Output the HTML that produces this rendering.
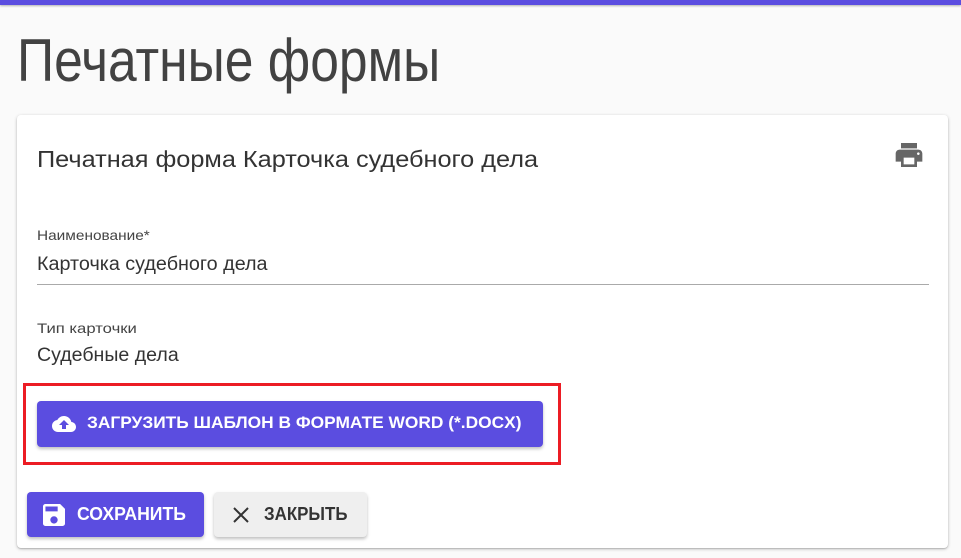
<!DOCTYPE html>
<html><head><meta charset="utf-8"><style>
body{margin:0;width:961px;height:558px;background:#fafafa;font-family:"Liberation Sans",sans-serif;position:relative;overflow:hidden;color:#333}
.bar{position:absolute;left:0;top:0;width:961px;height:5px;background:#5b4de0;box-shadow:0 1px 2px rgba(0,0,0,.3)}
.t{position:absolute;white-space:nowrap;transform-origin:0 0}
.card{position:absolute;left:17px;top:115px;width:931px;height:433px;background:#fff;border-radius:4px;box-shadow:0 1px 3px rgba(0,0,0,.25),0 1px 1px rgba(0,0,0,.12)}
.btn{position:absolute;border-radius:4px;box-shadow:0 2px 3px rgba(0,0,0,.25);font-weight:500}
</style></head><body>
<div class="bar"></div>
<div class="t" style="left:17px;top:26px;font-size:60px;color:#424242;transform:scaleX(0.86)">Печатные формы</div>
<div class="card"></div>
<div class="t" style="left:37px;top:146px;font-size:23px;color:#333;transform:scaleX(1.10)">Печатная форма Карточка судебного дела</div>
<svg style="position:absolute;left:895px;top:143px" width="28" height="24" viewBox="2 3 20 18"><path fill="#666" d="M19 8H5c-1.66 0-3 1.34-3 3v6h4v4h12v-4h4v-6c0-1.66-1.34-3-3-3zm-3 11H8v-5h8v5zm3-7c-.55 0-1-.45-1-1s.45-1 1-1 1 .45 1 1-.45 1-1 1zm-1-9H6v4h12V3z"/></svg>
<div class="t" style="left:37px;top:227px;font-size:14px;color:#444;transform:scaleX(1.1)">Наименование*</div>
<div class="t" style="left:37px;top:254px;font-size:19px;color:#333;transform:scaleX(1.04)">Карточка судебного дела</div>
<div style="position:absolute;left:37px;top:284px;width:892px;height:1px;background:#aaa"></div>
<div class="t" style="left:37px;top:320px;font-size:14px;color:#444;transform:scaleX(1.19)">Тип карточки</div>
<div class="t" style="left:37px;top:345px;font-size:19px;color:#333;transform:scaleX(1.03)">Судебные дела</div>
<div style="position:absolute;left:23px;top:383px;width:532px;height:76px;border:3px solid #ec1c24"></div>
<div class="btn" style="left:37px;top:401px;width:506px;height:46px;background:#5b4de0"></div>
<svg style="position:absolute;left:51px;top:412px" width="26" height="24" viewBox="0 0 24 24"><path fill="#fff" d="M19.35 10.04C18.670 6.59 15.64 4 12 4 9.11 4 6.6 5.64 5.35 8.04 2.34 8.36 0 10.91 0 14c0 3.31 2.69 6 6 6h13c2.76 0 5-2.240 5-5 0-2.64-2.05-4.78-4.65-4.96zM14 13v4h-4v-4H7l5-5 5 5h-3z"/></svg>
<div class="t" style="left:87px;top:413px;font-size:17px;color:#fff;font-weight:bold;transform:scaleX(1.02)">ЗАГРУЗИТЬ ШАБЛОН В ФОРМАТЕ WORD (*.DOCX)</div>
<div class="btn" style="left:27px;top:492px;width:177px;height:45px;background:#5b4de0"></div>
<svg style="position:absolute;left:43px;top:504px" width="22" height="22" viewBox="3 3 18 18"><path fill="#fff" d="M17 3H5c-1.11 0-2 .9-2 2v14c0 1.1.89 2 2 2h14c1.1 0 2-.9 2-2V7l-4-4zm-5 16c-1.66 0-3-1.34-3-3s1.34-3 3-3 3 1.34 3 3-1.34 3-3 3zm3-10H5V5h10v4z"/></svg>
<div class="t" style="left:77px;top:504px;font-size:18px;color:#fff;font-weight:bold;transform:scaleX(0.98)">СОХРАНИТЬ</div>
<div class="btn" style="left:214px;top:492px;width:153px;height:45px;background:#efefef"></div>
<svg style="position:absolute;left:232px;top:506px" width="18" height="18" viewBox="0 0 18 18"><path stroke="#333" stroke-width="2" d="M2 2L16 16M16 2L2 16"/></svg>
<div class="t" style="left:264px;top:504px;font-size:18px;color:#333;font-weight:bold;transform:scaleX(0.94)">ЗАКРЫТЬ</div>
</body></html>
